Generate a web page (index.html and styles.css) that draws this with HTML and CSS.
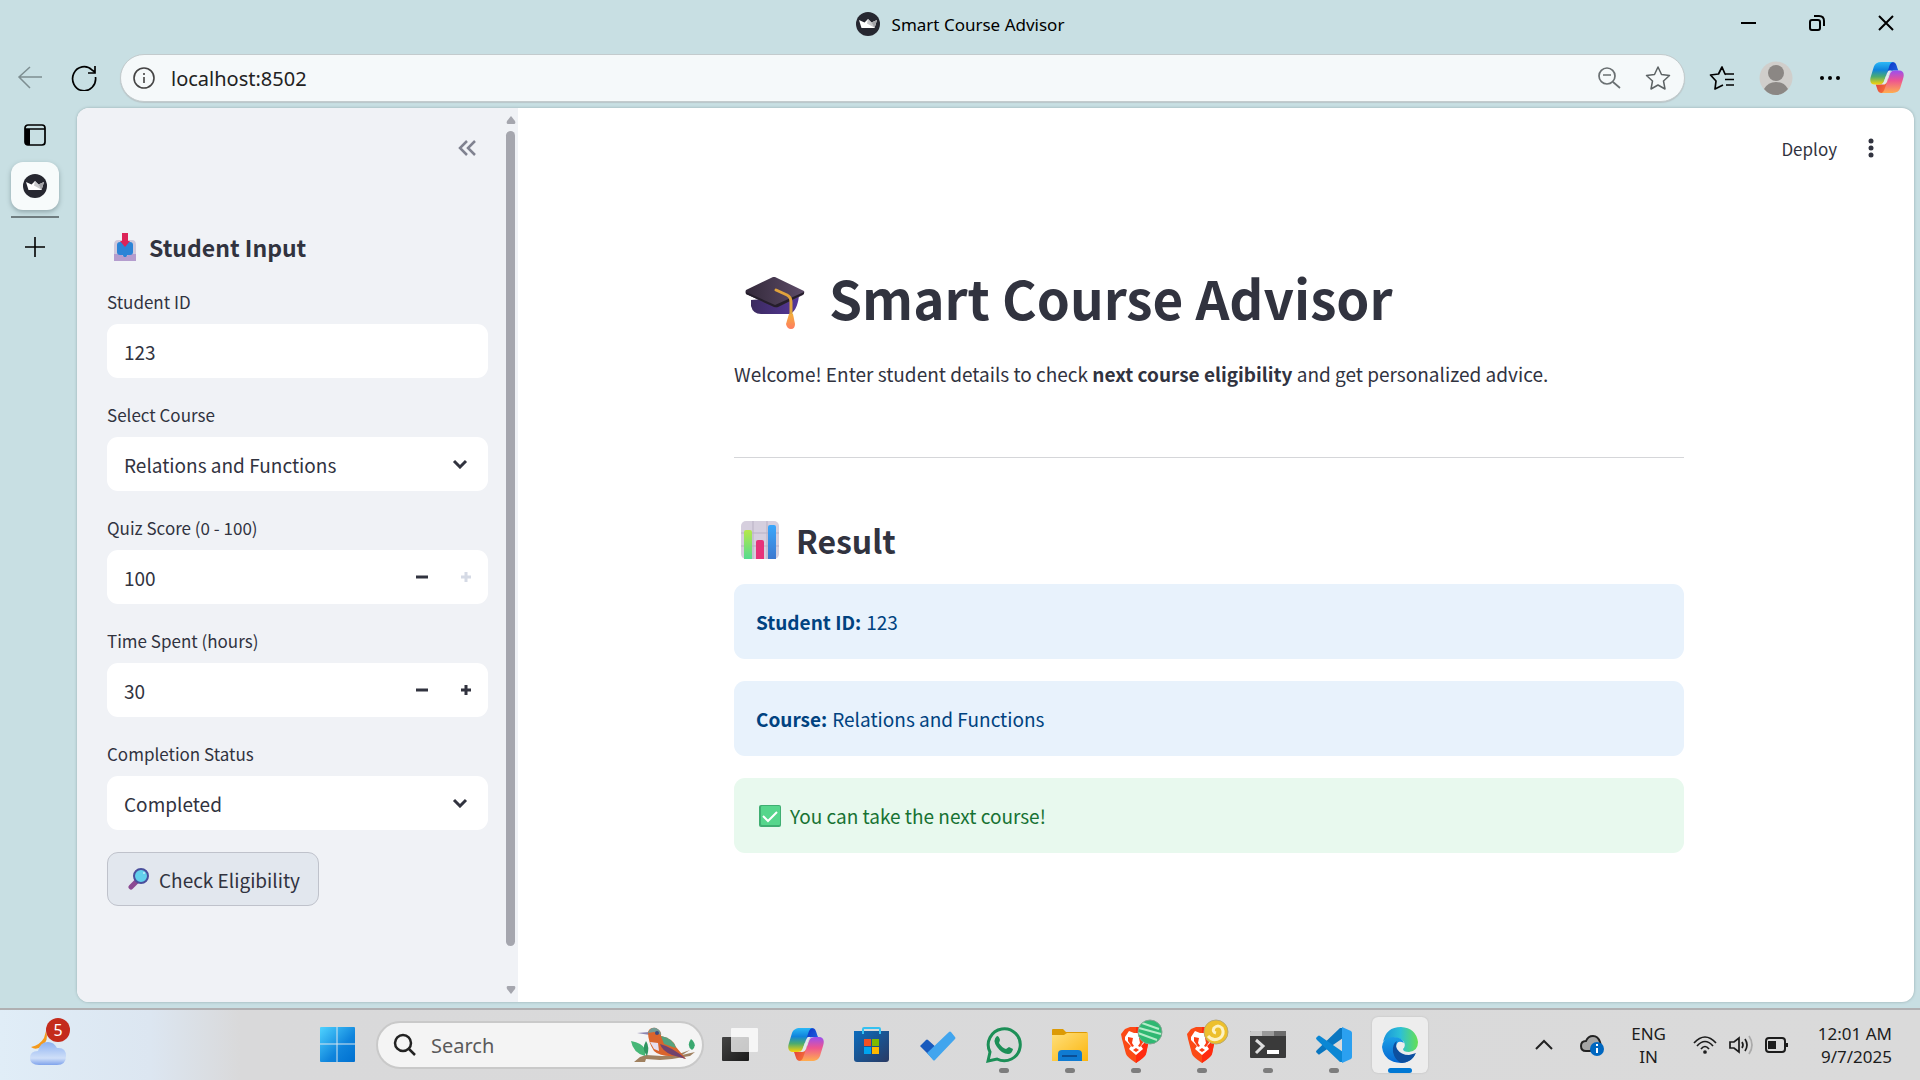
FILE: index.html
```html
<!DOCTYPE html>
<html lang="en">
<head>
<meta charset="utf-8">
<title>Smart Course Advisor</title>
<link rel="stylesheet" href="styles.css">
</head>
<body>
<svg class="defs" width="0" height="0" aria-hidden="true">
  <defs>
    <linearGradient id="cpBlue" x1="0" y1="0" x2="0" y2="1"><stop offset="0" stop-color="#2bb8f6"/><stop offset=".35" stop-color="#0f84dc"/><stop offset=".65" stop-color="#4cab70"/><stop offset="1" stop-color="#fbd305"/></linearGradient>
    <linearGradient id="cpPink" x1="0" y1="1" x2="0" y2="0"><stop offset="0" stop-color="#9a4ff0"/><stop offset=".45" stop-color="#ee5590"/><stop offset="1" stop-color="#ffae4e"/></linearGradient>
    <linearGradient id="cpNavy" x1="0" y1="0" x2="1" y2="1"><stop offset="0" stop-color="#0a2fc4"/><stop offset="1" stop-color="#2470e8"/></linearGradient>
    <linearGradient id="cpRed" x1="0" y1="0" x2="1" y2="1"><stop offset="0" stop-color="#d8303a"/><stop offset="1" stop-color="#fb7a38"/></linearGradient>
    <linearGradient id="win" x1="0" y1="0" x2="1" y2="1"><stop offset="0" stop-color="#4fd3ff"/><stop offset=".6" stop-color="#0f84dc"/><stop offset="1" stop-color="#0070d0"/></linearGradient>
    <linearGradient id="capTop" x1="0" y1="0" x2="1" y2="0"><stop offset="0" stop-color="#33293a"/><stop offset="1" stop-color="#5d4c68"/></linearGradient>
    <linearGradient id="capBase" x1="0" y1="0" x2="1" y2="0"><stop offset="0" stop-color="#3b2a5e"/><stop offset="1" stop-color="#55379a"/></linearGradient>
    <linearGradient id="tassel" x1="0" y1="0" x2="0" y2="1"><stop offset="0" stop-color="#f3ae3a"/><stop offset="1" stop-color="#ff7d62"/></linearGradient>
    <linearGradient id="barG" x1="0" y1="0" x2="0" y2="1"><stop offset="0" stop-color="#b5e84a"/><stop offset="1" stop-color="#55db90"/></linearGradient>
    <linearGradient id="barB" x1="0" y1="0" x2="0" y2="1"><stop offset="0" stop-color="#3aa7fb"/><stop offset="1" stop-color="#3d78cf"/></linearGradient>
    <linearGradient id="cloud" x1="0" y1="0" x2="0" y2="1"><stop offset="0" stop-color="#8db2f2"/><stop offset=".7" stop-color="#cfdff8"/><stop offset="1" stop-color="#7fa3ec"/></linearGradient>
    <linearGradient id="store" x1="0" y1="0" x2="1" y2="1"><stop offset="0" stop-color="#0b6cbd"/><stop offset="1" stop-color="#2a3a63"/></linearGradient>
    <linearGradient id="folder" x1="0" y1="0" x2="1" y2="1"><stop offset="0" stop-color="#ffdf7a"/><stop offset="1" stop-color="#fbb50e"/></linearGradient>
    <linearGradient id="edgeTop" x1="0" y1="0" x2="1" y2="0"><stop offset="0" stop-color="#1993dc"/><stop offset=".5" stop-color="#2cc0d6"/><stop offset="1" stop-color="#66e052"/></linearGradient>
    <linearGradient id="edgeMid" x1="0" y1="0" x2="0" y2="1"><stop offset="0" stop-color="#1b9ee6"/><stop offset="1" stop-color="#0667d2"/></linearGradient>
    <linearGradient id="viewDark" x1="0" y1="0" x2="1" y2="1"><stop offset="0" stop-color="#444"/><stop offset="1" stop-color="#1a1a1a"/></linearGradient>
    <symbol id="crown" viewBox="0 0 24 24">
      <circle cx="12" cy="12" r="12" fill="#262730"/>
      <path d="M3 8 8.500 10.500 12 7 15.500 10.500 21 8 18.500 16H5.500Z" fill="#fff"/>
      <path d="M12 7 15.500 10.500 19 16 11 11.500Z" fill="#c9c9cc"/><path d="M21 8 18.500 16 15.500 10.500Z" fill="#a2a2a6"/>
    </symbol>
    <symbol id="copilot" viewBox="0 0 36 34">
      <path d="M18 0H24C28 0 28 4 30 9H26C22 9 21 10 20 13L17 20Z" fill="url(#cpNavy)"/>
      <path d="M18 33H12C8 33 8 29 6 24H10C14 24 15 23 16 20L19 13Z" fill="url(#cpRed)"/>
      <path d="M12 0H25C22 0 21 3 20 6L15 20C14 23 12 24 9 24H5C1 24-1 21 1 15L4 5C5 2 8 0 12 0Z" fill="url(#cpBlue)"/>
      <path transform="rotate(180 18 16.500)" d="M12 0H25C22 0 21 3 20 6L15 20C14 23 12 24 9 24H5C1 24-1 21 1 15L4 5C5 2 8 0 12 0Z" fill="url(#cpPink)"/>
      <path d="M20 9H24C22 9 21 11 20 14L18 21Q17 24 14 24H11Q14 24 15 20L18 12Q19 9 20 9Z" fill="#e3eaec"/>
    </symbol>
    <symbol id="brave" viewBox="0 0 42 44">
      <path d="M9 8H21L29 15 28 21 25 35Q24 38 15 44 6 38 5 35L1 20 0 15 4 10Z" fill="#fb4a16"/>
      <path d="M15 44V8H21L29 15 25 35Q24 38 15 44Z" fill="#ff2a10"/>
      <path d="M8 12 13 14H17L22 12 26 18 25 22 20 27 22 30 15 36 8 30 10 27 4 21 4 18Z" fill="#fff"/>
      <path d="M7 18 12 19 11 24 13 27 11 28 7 22ZM23 18 18 19 19 24 17 27 19 28 23 22ZM12 31 15 29 18 31 15 33Z" fill="#fb3f14"/>
    </symbol>
  </defs>
</svg>

<header class="titlebar">
  <div class="page-title">
    <svg width="24" height="24"><use href="#crown"/></svg>
    <span>Smart Course Advisor</span>
  </div>
  <div class="window-controls">
    <button aria-label="Minimize"><svg width="16" height="16"><path d="M1 8H16" stroke="#000" stroke-width="2"/></svg></button>
    <button aria-label="Restore"><svg width="16" height="16" fill="none" stroke="#000" stroke-width="2"><rect x="1" y="5" width="10" height="10" rx="2"/><path d="M5 1H10Q15 1 15 6V11"/></svg></button>
    <button aria-label="Close"><svg width="16" height="16"><path d="M1 1 15 15M15 1 1 15" stroke="#000" stroke-width="2"/></svg></button>
  </div>
</header>

<nav class="toolbar" aria-label="Browser">
  <button class="tool" aria-label="Back"><svg width="26" height="26" fill="none" stroke="#7d8e91" stroke-width="1.500"><path d="M25 12H2M13 2 2 12 13 23"/></svg></button>
  <button class="tool" aria-label="Refresh"><svg width="26" height="26" fill="none" stroke="#000" stroke-width="1.700"><path d="M24.500 12A11.500 12 0 1 1 21 5L24 7M24 1V8H17"/></svg></button>
  <div class="address">
    <svg width="22" height="22" fill="none" stroke="#444" stroke-width="1.600"><circle cx="11" cy="11" r="10"/><path d="M11 10V16M11 6V8"/></svg>
    <input type="text" aria-label="Address" value="localhost:8502">
    <button aria-label="Zoom out"><svg width="24" height="24" fill="none" stroke="#6a7072" stroke-width="1.700"><circle cx="10" cy="10" r="8"/><path d="M16 16 23 22M6 9H14"/></svg></button>
    <button aria-label="Favorite"><svg width="26" height="26" fill="none" stroke="#5c6264" stroke-width="1.500" stroke-linejoin="round"><path d="M13 2 16.500 9.500 24.500 10.500 18.500 16 20 24 13 20 6 24 7.500 16 1.500 10.500 9.500 9.500Z"/></svg></button>
  </div>
  <button class="tool" aria-label="Favorites list"><svg width="26" height="26" fill="none" stroke="#000" stroke-width="1.700" stroke-linejoin="round"><path d="M17 9.500 16 9 13 2 9.500 9 1.500 10 7 16 6 24 14 20M16 9H25M16 14.500H25M17 20H25"/></svg></button>
  <button class="tool" aria-label="Profile"><svg width="34" height="34"><circle cx="17" cy="17" r="16.500" fill="#d0cecb"/><circle cx="17" cy="12" r="8" fill="#8b8784"/><path d="M5 28Q9 21 17 21T29 28Q24 34 17 34T5 28Z" fill="#8b8784"/></svg></button>
  <button class="tool" aria-label="More"><svg width="20" height="6"><circle cx="2" cy="3" r="2"/><circle cx="10" cy="3" r="2"/><circle cx="18" cy="3" r="2"/></svg></button>
  <button class="tool assistant" aria-label="Copilot"><svg width="34" height="32"><use href="#copilot"/></svg></button>
</nav>

<div class="workspace">
  <aside class="tabs">
    <button class="tab-toggle" aria-label="Vertical tabs"><svg width="22" height="22"><rect x="1" y="1" width="20" height="20" rx="3" fill="none" stroke="#000" stroke-width="1.700"/><path d="M1 5H21" stroke="#000" stroke-width="1.500"/><path d="M1 5H6V21H3L1 19Z"/></svg></button>
    <button class="tab" aria-label="Smart Course Advisor"><svg width="24" height="24"><use href="#crown"/></svg></button>
    <hr class="tab-line">
    <button class="tab-new" aria-label="New tab"><svg width="22" height="22"><path d="M1 11H21M11 1V21" stroke="#000" stroke-width="1.600"/></svg></button>
  </aside>

  <div class="app">
    <aside class="sidebar">
      <form class="side-body">
        <button type="button" class="collapse" aria-label="Collapse sidebar"><svg width="20" height="18" fill="none" stroke="#808290" stroke-width="2.500"><path d="M10 2 3 9 10 16M18 2 11 9 18 16"/></svg></button>
        <h2>
          <svg width="22" height="28"><path d="M0 12Q0 7 4 7H18Q22 7 22 12V27H0Z" fill="#cfc9dc"/><path d="M0 21H7L9 23H13L15 21H22V28H0Z" fill="#b49dce"/><rect x="3" y="9" width="16" height="13" rx="3" fill="#2b84d6"/><path d="M8 21H14L12 24H10Z" fill="#2b84d6"/><path d="M8 0H14V8H16L11 14 6 8H8Z" fill="#dc2458"/></svg>
          Student Input
        </h2>
        <div class="field">
          <label for="sid">Student ID</label>
          <div class="control"><input id="sid" type="text" value="123"></div>
        </div>
        <div class="field">
          <label for="course">Select Course</label>
          <div class="control"><select id="course"><option>Relations and Functions</option></select><svg class="chevron" width="16" height="10"><path d="M2 2 8 8 14 2" fill="none" stroke="#31333f" stroke-width="3"/></svg></div>
        </div>
        <div class="field">
          <label for="quiz">Quiz Score (0 - 100)</label>
          <div class="control"><input id="quiz" type="number" value="100"><button type="button" class="step" aria-label="Decrease score"><svg width="12" height="12"><path d="M0 6H12" stroke="#31333f" stroke-width="3"/></svg></button><button type="button" class="step" disabled aria-label="Increase score"><svg width="12" height="12"><path d="M1 6H11M6 1V11" stroke="#d5dae5" stroke-width="3"/></svg></button></div>
        </div>
        <div class="field">
          <label for="time">Time Spent (hours)</label>
          <div class="control"><input id="time" type="number" value="30"><button type="button" class="step" aria-label="Decrease hours"><svg width="12" height="12"><path d="M0 6H12" stroke="#31333f" stroke-width="3"/></svg></button><button type="button" class="step" aria-label="Increase hours"><svg width="12" height="12"><path d="M1 6H11M6 1V11" stroke="#31333f" stroke-width="3"/></svg></button></div>
        </div>
        <div class="field">
          <label for="status">Completion Status</label>
          <div class="control"><select id="status"><option>Completed</option></select><svg class="chevron" width="16" height="10"><path d="M2 2 8 8 14 2" fill="none" stroke="#31333f" stroke-width="3"/></svg></div>
        </div>
        <button type="button" class="check">
          <svg width="22" height="22"><path d="M3 19 9 13" stroke="#8c4a92" stroke-width="5" stroke-linecap="round"/><circle cx="13" cy="8" r="7" fill="#62d0ec" stroke="#4a4f9c" stroke-width="2"/><circle cx="16" cy="5" r="1" fill="#c5effa"/></svg>
          Check Eligibility
        </button>
      </form>
      <div class="scrollbar" aria-hidden="true">
        <svg width="10" height="8"><path d="M5 0 9 5Q10 8 8 8H2Q0 8 1 5Z" fill="#a5a6ae"/></svg>
        <div class="thumb"></div>
        <svg width="10" height="8"><path d="M5 8 9 3Q10 0 8 0H2Q0 0 1 3Z" fill="#a5a6ae"/></svg>
      </div>
    </aside>

    <main class="main">
      <div class="app-bar">
        <button class="deploy">Deploy</button>
        <button class="kebab" aria-label="Menu"><svg width="6" height="20" fill="#31333f"><circle cx="3" cy="3" r="2.500"/><circle cx="3" cy="10" r="2.500"/><circle cx="3" cy="17" r="2.500"/></svg></button>
      </div>
      <div class="content">
        <h1>
          <svg width="60" height="54"><path d="M6 24V30Q8 38 16 38H44Q52 36 54 20Z" fill="url(#capBase)"/><path d="M30 1 59 15Q60 17 58 19L33 31Q30 32 27 30L1 18Q0 16 1 14L28 1Z" fill="url(#capTop)"/><path d="M1 16 30 29 59 16V18L33 31Q30 32 27 30L1 18Z" fill="#251e2b"/><path d="M31 14 42 19Q46 21 46 26V40" fill="none" stroke="#e0a33c" stroke-width="3" stroke-linecap="round"/><path d="M44 38H48L50 48Q50 53 46 53T41 48Z" fill="url(#tassel)"/></svg>
          Smart Course Advisor
        </h1>
        <p class="intro">Welcome! Enter student details to check <strong>next course eligibility</strong> and get personalized advice.</p>
        <hr class="divider">
        <h3>
          <svg width="38" height="38"><rect width="38" height="38" rx="5" fill="#d6cfde"/><path d="M12 0V38M26 0V38M0 12H38M0 25H38" stroke="#b9b1c4" stroke-width="1"/><path d="M3 38V11Q3 9 5 9H9Q11 9 11 11V38Z" fill="url(#barG)"/><path d="M15 38V21Q15 19 17 19H21Q23 19 23 21V38Z" fill="#e6327a"/><path d="M27 38V6Q27 4 29 4H33Q35 4 35 6V38Z" fill="url(#barB)"/></svg>
          Result
        </h3>
        <div class="alert info"><strong>Student ID:</strong> 123</div>
        <div class="alert info"><strong>Course:</strong> Relations and Functions</div>
        <div class="alert success"><svg width="22" height="22"><rect width="22" height="22" rx="2" fill="#3fae72"/><rect x="2" y="1" width="19" height="19" rx="1" fill="#56d68c"/><path d="M4 11 9 16 18 7" fill="none" stroke="#fff" stroke-width="2"/></svg>You can take the next course!</div>
      </div>
    </main>
  </div>
</div>

<footer class="taskbar">
  <button class="weather" aria-label="Weather">
    <svg width="42" height="46"><path d="M16 8Q19 18 12 23 6 28 1 24 10 22 14 15Z" transform="translate(0 1)" fill="#f49a1c"/><path d="M9 43Q0 43 0 36T8 29Q10 20 18 20 24 20 27 26 36 25 36 34T27 43Z" fill="url(#cloud)"/></svg>
    <span class="badge">5</span>
  </button>
  <div class="apps">
    <button class="app-icon" aria-label="Start"><svg width="36" height="36"><rect x="0" y="0" width="35" height="35" rx="1" fill="url(#win)"/><path d="M17 0V35M0 17H35" stroke="#d9e6ee" stroke-width="1"/></svg></button>
    <div class="search">
      <svg width="24" height="24" fill="none" stroke="#222" stroke-width="2.500"><circle cx="10" cy="10" r="8"/><path d="M16 16 22 22"/></svg>
      <input type="text" aria-label="Search" placeholder="Search">
      <svg width="66" height="36"><path d="M4 35 10 30 16 28 32 29 46 28 60 23 52 28 65 25 60 29 42 32 30 33 16 32 15 35Z" fill="#a08160"/><path d="M1 14Q12 16 15 22 17 14 16 15L15 29Q3 26 1 14Z" fill="#46b777"/><path d="M16 14Q20 20 17 29 11 22 16 14Z" fill="#2f9560"/><path d="M61 12Q68 18 62 23 56 19 61 12Z" fill="#3aa870"/><path d="M7 6 19 5 20 8Z" fill="#8c86b0"/><path d="M18 5Q20 0 26 1 32 4 31 9 44 12 46 20L56 32 46 29Q30 30 24 24 18 15 18 5Z" fill="#d9642c"/><path d="M18 6Q20 0 26 1 31 3 31 8L24 5Z" fill="#739b94"/><path d="M31 9Q43 11 46 21L34 17Z" fill="#55a37e"/><path d="M20 15 28 16 29 24 24 22Z" fill="#e6dff0"/><path d="M30 17Q42 20 56 32L42 28Q32 24 30 17Z" fill="#71426e"/><circle cx="27" cy="6" r="2" fill="#3d4a80"/></svg>
    </div>
    <button class="app-icon" aria-label="Task view"><svg width="36" height="36"><rect x="0" y="10" width="27" height="24" rx="1" fill="url(#viewDark)"/><rect x="9" y="1" width="27" height="24" rx="1" fill="#fff" opacity=".75"/></svg></button>
    <button class="app-icon" aria-label="Copilot"><svg width="36" height="34"><use href="#copilot"/></svg></button>
    <button class="app-icon" aria-label="Store"><svg width="36" height="36"><path d="M9 8V2Q9 1 10 1H25Q26 1 26 2V8" fill="none" stroke="#35c1f1" stroke-width="2"/><path d="M0 4H35V32Q35 35 32 35H3Q0 35 0 32Z" fill="url(#store)"/><path d="M9 4V7M26 4V7" stroke="#35c1f1" stroke-width="2"/><path d="M10 12H17V19H10Z" fill="#f25022"/><path d="M18 12H25V19H18Z" fill="#7fba00"/><path d="M10 20H17V27H10Z" fill="#00a4ef"/><path d="M18 20H25V27H18Z" fill="#ffb900"/></svg></button>
    <button class="app-icon" aria-label="To Do"><svg width="36" height="32"><path d="M0 17 6 11Q7 10 8 11L18 20 12 29Z" fill="#185abd"/><path d="M7 24 29 3Q30 2 31 3L35 8Q36 9 35 10L15 31Q14 32 13 31Z" fill="#41a5ee"/></svg></button>
    <button class="app-icon running" aria-label="WhatsApp"><svg width="36" height="36"><path d="M2 34 4 25A16 16 0 1 1 11 32Z" fill="none" stroke="#1c8f57" stroke-width="3"/><path d="M11 9Q13 9 14 13L13 16Q16 21 20 22L23 20 27 22Q26 27 22 27 16 27 11 20T11 9Z" fill="#1c8f57"/></svg></button>
    <button class="app-icon running" aria-label="File Explorer"><svg width="36" height="36"><path d="M0 3Q0 2 1 2H11L14 5H34Q36 5 36 7V12H0Z" fill="#dc9a05"/><path d="M0 8H12L15 6H36V34H0Z" fill="url(#folder)"/><path d="M6 34V27Q6 23 10 23H26Q30 23 30 27V34Z" fill="#0f7bd2"/><path d="M10 29H25" stroke="#0a4f96" stroke-width="2"/></svg></button>
    <button class="app-icon running badge-icon" aria-label="Brave"><svg width="42" height="44"><use href="#brave"/><circle cx="29" cy="13" r="12" fill="#2fb872"/><path d="M18 9 40 15M21 4 38 10M17 14 36 21" stroke="#b5ecc9" stroke-width="2"/><circle cx="29" cy="13" r="12" fill="none" stroke="#83a691"/></svg></button>
    <button class="app-icon running badge-icon" aria-label="Brave profile two"><svg width="42" height="44"><use href="#brave"/><circle cx="29" cy="13" r="12" fill="#edc02c"/><path d="M29 14Q25 13 27 9 31 5 35 9 38 15 33 19 26 23 21 17" fill="none" stroke="#fdf2c2" stroke-width="3"/><circle cx="29" cy="13" r="12" fill="none" stroke="#b8a870"/></svg></button>
    <button class="app-icon running" aria-label="Terminal"><svg width="36" height="28"><rect width="36" height="27" rx="1" fill="#3a3a3a"/><path d="M0 1Q0 0 1 0H12V5H0Z" fill="#c8c8c8"/><path d="M12 0H24V5H12Z" fill="#9a9a9a"/><path d="M24 0H36V5H24Z" fill="#6c6c6c"/><path d="M6 9 13 15 6 22" fill="none" stroke="#ddd" stroke-width="3"/><path d="M17 21H29" stroke="#fff" stroke-width="4"/></svg></button>
    <button class="app-icon running" aria-label="Visual Studio Code"><svg width="36" height="36"><path d="M27 1V11L4 27Q3 28 2 27L0 25Q0 24 1 23L24 1Z" fill="#0a76c0"/><path d="M27 35V25L4 9Q3 8 2 9L0 11Q0 12 1 13L24 35Z" fill="#0b87d4"/><path d="M26 0 35 4Q36 5 36 6V30Q36 31 35 32L26 36Z" fill="#2ba0f0"/></svg></button>
    <button class="app-icon active" aria-label="Edge"><svg width="36" height="36"><path d="M1 15Q4 0 19 0 34 1 36 15 36 24 27 25 21 25 21 22 24 19 22 15 17 10 10 11 3 12 1 15Z" fill="url(#edgeTop)"/><path d="M0 20Q1 10 11 10 20 10 22 16 15 12 14 20 14 30 25 31 29 30 33 28 28 36 19 36 2 35 0 20Z" fill="url(#edgeMid)"/><path d="M11 25Q10 17 15 14 13 18 15 22 19 28 27 28 31 27 34 26 30 35 20 36 13 34 11 25Z" fill="#0d4f9f"/></svg></button>
  </div>
  <div class="tray">
    <button aria-label="Hidden icons"><svg width="18" height="12"><path d="M1 10 9 2 17 10" fill="none" stroke="#222" stroke-width="2"/></svg></button>
    <button aria-label="OneDrive"><svg width="24" height="22"><path d="M6 17Q1 17 1 12T6 7Q8 2 13 2T20 8L21 12 10 17Z" fill="#a5a5a5" stroke="#222" stroke-width="2"/><circle cx="17" cy="15" r="7" fill="#0067c0"/><path d="M17 14V19M17 10V12" stroke="#fff" stroke-width="2"/></svg></button>
    <div class="lang">ENG<br>IN</div>
    <div class="status">
      <svg width="24" height="20" fill="none" stroke="#1c1c1c" stroke-width="1.700"><path d="M1 8Q12-4 23 8M4 11Q12 2 20 11M8 14Q12 9 16 14"/><circle cx="12" cy="17" r="1"/></svg>
      <svg width="24" height="20" fill="none" stroke="#1c1c1c" stroke-width="1.700"><path d="M1 7H5L10 3V17L5 13H1ZM13 7Q15 10 13 13M16 4Q20 10 16 16"/><path d="M20 1Q26 10 20 19" stroke="#aaa"/></svg>
      <svg width="24" height="20" fill="none" stroke="#1c1c1c" stroke-width="2"><rect x="1" y="3" width="19" height="14" rx="3"/><path d="M3 6H11V14H3ZM21 8H23V12H21Z" fill="#1c1c1c" stroke="none"/><path d="M22 8V12"/></svg>
    </div>
    <div class="clock">12:01 AM<br>9/7/2025</div>
  </div>
</footer>
</body>
</html>
```
FILE: styles.css
```css
:root {
  --chrome: #c8dfe3;
  --ink: #31333f;
  --ui: "Noto Sans", "Open Sans", sans-serif;
  --app: "Noto Sans CJK SC", "Noto Sans", sans-serif;
}

* { box-sizing: border-box; }

body {
  margin: 0;
  min-height: 100vh;
  display: flex;
  flex-direction: column;
  background: var(--chrome);
  font-family: var(--ui);
  color: #000;
}

svg { display: block; flex: none; }
.defs { position: absolute; }

button {
  padding: 0;
  border: 0;
  background: none;
  font: inherit;
  color: inherit;
  display: flex;
  align-items: center;
  justify-content: center;
}

input, select {
  min-width: 0;
  padding: 0;
  border: 0;
  outline: 0;
  background: none;
  font: inherit;
  color: inherit;
  appearance: none;
}

/* Window title */
.titlebar {
  display: grid;
  grid-template-columns: 1fr auto 1fr;
  height: 54px;
}
.page-title {
  grid-column: 2;
  display: flex;
  align-items: center;
  gap: 12px;
  height: 48px;
  font-size: 17px;
}
.window-controls { display: flex; justify-content: flex-end; height: 46px; }
.window-controls button { width: 69px; }

/* Address row */
.toolbar {
  display: flex;
  align-items: center;
  height: 48px;
  margin-bottom: 6px;
  padding: 0 6px 0 3px;
}
.tool { width: 54px; height: 48px; }
.assistant { margin-left: 3px; }
.address {
  flex: 1;
  display: flex;
  align-items: center;
  height: 48px;
  margin: 0 10px 0 9px;
  padding: 0 13px 0 12px;
  border: 1px solid #c3cbcd;
  border-radius: 24px;
  background: #f5f9fa;
  box-shadow: 0 1px 1px #b9c6c9;
}
.address input { flex: 1; margin-left: 16px; font-size: 20px; color: #222; }
.address button { margin-left: 24px; }

/* Tab strip and page */
.workspace { flex: 1; display: flex; padding: 0 6px 6px 0; }
.tabs {
  width: 77px;
  padding: 16px 18px 0 11px;
  display: flex;
  flex-direction: column;
  align-items: center;
}
.tab {
  width: 48px;
  height: 48px;
  margin-top: 16px;
  border-radius: 12px;
  background: #f7fbfb;
  box-shadow: 0 2px 5px #8fa5a9;
}
.tab-line { width: 48px; height: 2px; margin: 6px 0 18px; border: 0; background: #6f7c7f; }

.app {
  flex: 1;
  display: flex;
  border-radius: 12px;
  overflow: hidden;
  background: #fff;
  box-shadow: 0 0 3px #94aaae;
  font-family: var(--app);
  color: var(--ink);
}

/* Sidebar form */
.sidebar { width: 441px; display: flex; background: #f0f2f6; }
.side-body { flex: 1; display: flex; flex-direction: column; gap: 22px; padding: 30px 15px 0 30px; }
.collapse { align-self: flex-end; margin-right: 11px; height: 20px; }
.side-body h2 {
  display: flex;
  align-items: center;
  gap: 13px;
  height: 36px;
  margin: 49px 0 0;
  padding-left: 7px;
  font-size: 23px;
  font-weight: 600;
  line-height: 36px;
}
.field { display: flex; flex-direction: column; gap: 7px; }
.field label { height: 30px; font-size: 17px; line-height: 30px; }
.control {
  display: flex;
  align-items: center;
  height: 54px;
  padding: 0 0 0 17px;
  border-radius: 11px;
  background: #fff;
  font-size: 19px;
}
.control input, .control select { flex: 1; height: 54px; }
.control input[type="number"]::-webkit-inner-spin-button { appearance: none; margin: 0; }
.step { width: 44px; height: 54px; }
.chevron { margin-right: 20px; }
.check {
  align-self: flex-start;
  height: 54px;
  padding: 0 18px 0 20px;
  gap: 9px;
  border: 1px solid #bfc2cb;
  border-radius: 11px;
  background: #e2e7ee;
  font-size: 19px;
}
.scrollbar {
  width: 15px;
  padding: 8px 0;
  display: flex;
  flex-direction: column;
  align-items: center;
}
.thumb { flex: 1; width: 9px; margin: 7px 0 40px; border-radius: 5px; background: #a5a6ae; }

/* Main area */
.main { flex: 1; display: flex; flex-direction: column; padding-right: 14px; }
.app-bar {
  display: flex;
  align-items: center;
  justify-content: flex-end;
  gap: 31px;
  height: 80px;
  padding-right: 26px;
}
.deploy { font-size: 17px; }
.content { width: 100%; max-width: 950px; margin: 0 auto; }
.content h1 {
  display: flex;
  align-items: flex-start;
  gap: 24px;
  height: 72px;
  margin: 78px 0 20px;
  padding-left: 11px;
  font-size: 53px;
  font-weight: 700;
  line-height: 62px;
}
.content h1 svg { margin-top: 10px; }
.intro { margin: 0; font-size: 19px; line-height: 32px; }
strong { font-weight: 600; }
.divider { height: 1px; margin: 67px 0 57px; border: 0; background: #d5d6d9; }
.content h3 {
  display: flex;
  align-items: center;
  gap: 17px;
  height: 50px;
  margin: 0 0 19px;
  padding-left: 7px;
  font-size: 32px;
  font-weight: 600;
  line-height: 50px;
}
.alert {
  display: flex;
  align-items: center;
  gap: 5px;
  height: 75px;
  margin-bottom: 22px;
  padding: 0 22px;
  border-radius: 11px;
  font-size: 19px;
}
.info { background: #e8f2fc; color: #004280; }
.success { padding-left: 25px; gap: 9px; background: #e8f9ee; color: #177233; }

/* Taskbar */
.taskbar {
  display: flex;
  align-items: center;
  height: 72px;
  border-top: 2px solid #b0b0b2;
  background: linear-gradient(90deg, #e0edf7, #dce6f1 150px, #d9d9da 240px, #dadada);
}
.weather { position: relative; width: 305px; height: 70px; padding-left: 30px; justify-content: flex-start; }
.badge {
  position: absolute;
  left: 46px;
  top: 8px;
  width: 24px;
  height: 24px;
  border-radius: 50%;
  background: #c42b1c;
  color: #fff;
  font-size: 16px;
  line-height: 24px;
  text-align: center;
}
.apps { display: flex; align-items: center; }
.app-icon { position: relative; width: 66px; height: 70px; }
.badge-icon svg { margin: -8px 0 0 12px; }
.running::after, .active::after {
  content: "";
  position: absolute;
  bottom: 7px;
  left: 28px;
  width: 10px;
  height: 5px;
  border-radius: 3px;
  background: #7d7d7d;
}
.active { width: 56px; height: 56px; margin: 0 5px; border-radius: 6px; background: #ededed; box-shadow: 0 0 2px #bbb; }
.active::after { left: 16px; bottom: 0; width: 24px; background: #0078d4; }
.search {
  display: flex;
  align-items: center;
  width: 328px;
  height: 48px;
  margin: 0 3px 0 5px;
  padding: 0 6px 0 15px;
  border: 2px solid #c9c9c9;
  border-radius: 24px;
  background: #f4f4f4;
}
.search input { flex: 1; margin-left: 14px; font-size: 20px; }
.search input::placeholder { color: #5a5a5a; }
.tray {
  display: flex;
  align-items: center;
  margin-left: auto;
  padding-right: 28px;
  gap: 27px;
  font-size: 17px;
  line-height: 23px;
  color: #1c1c1c;
}
.lang { text-align: center; }
.status { display: flex; gap: 12px; }
.clock { min-width: 76px; text-align: right; }
```
